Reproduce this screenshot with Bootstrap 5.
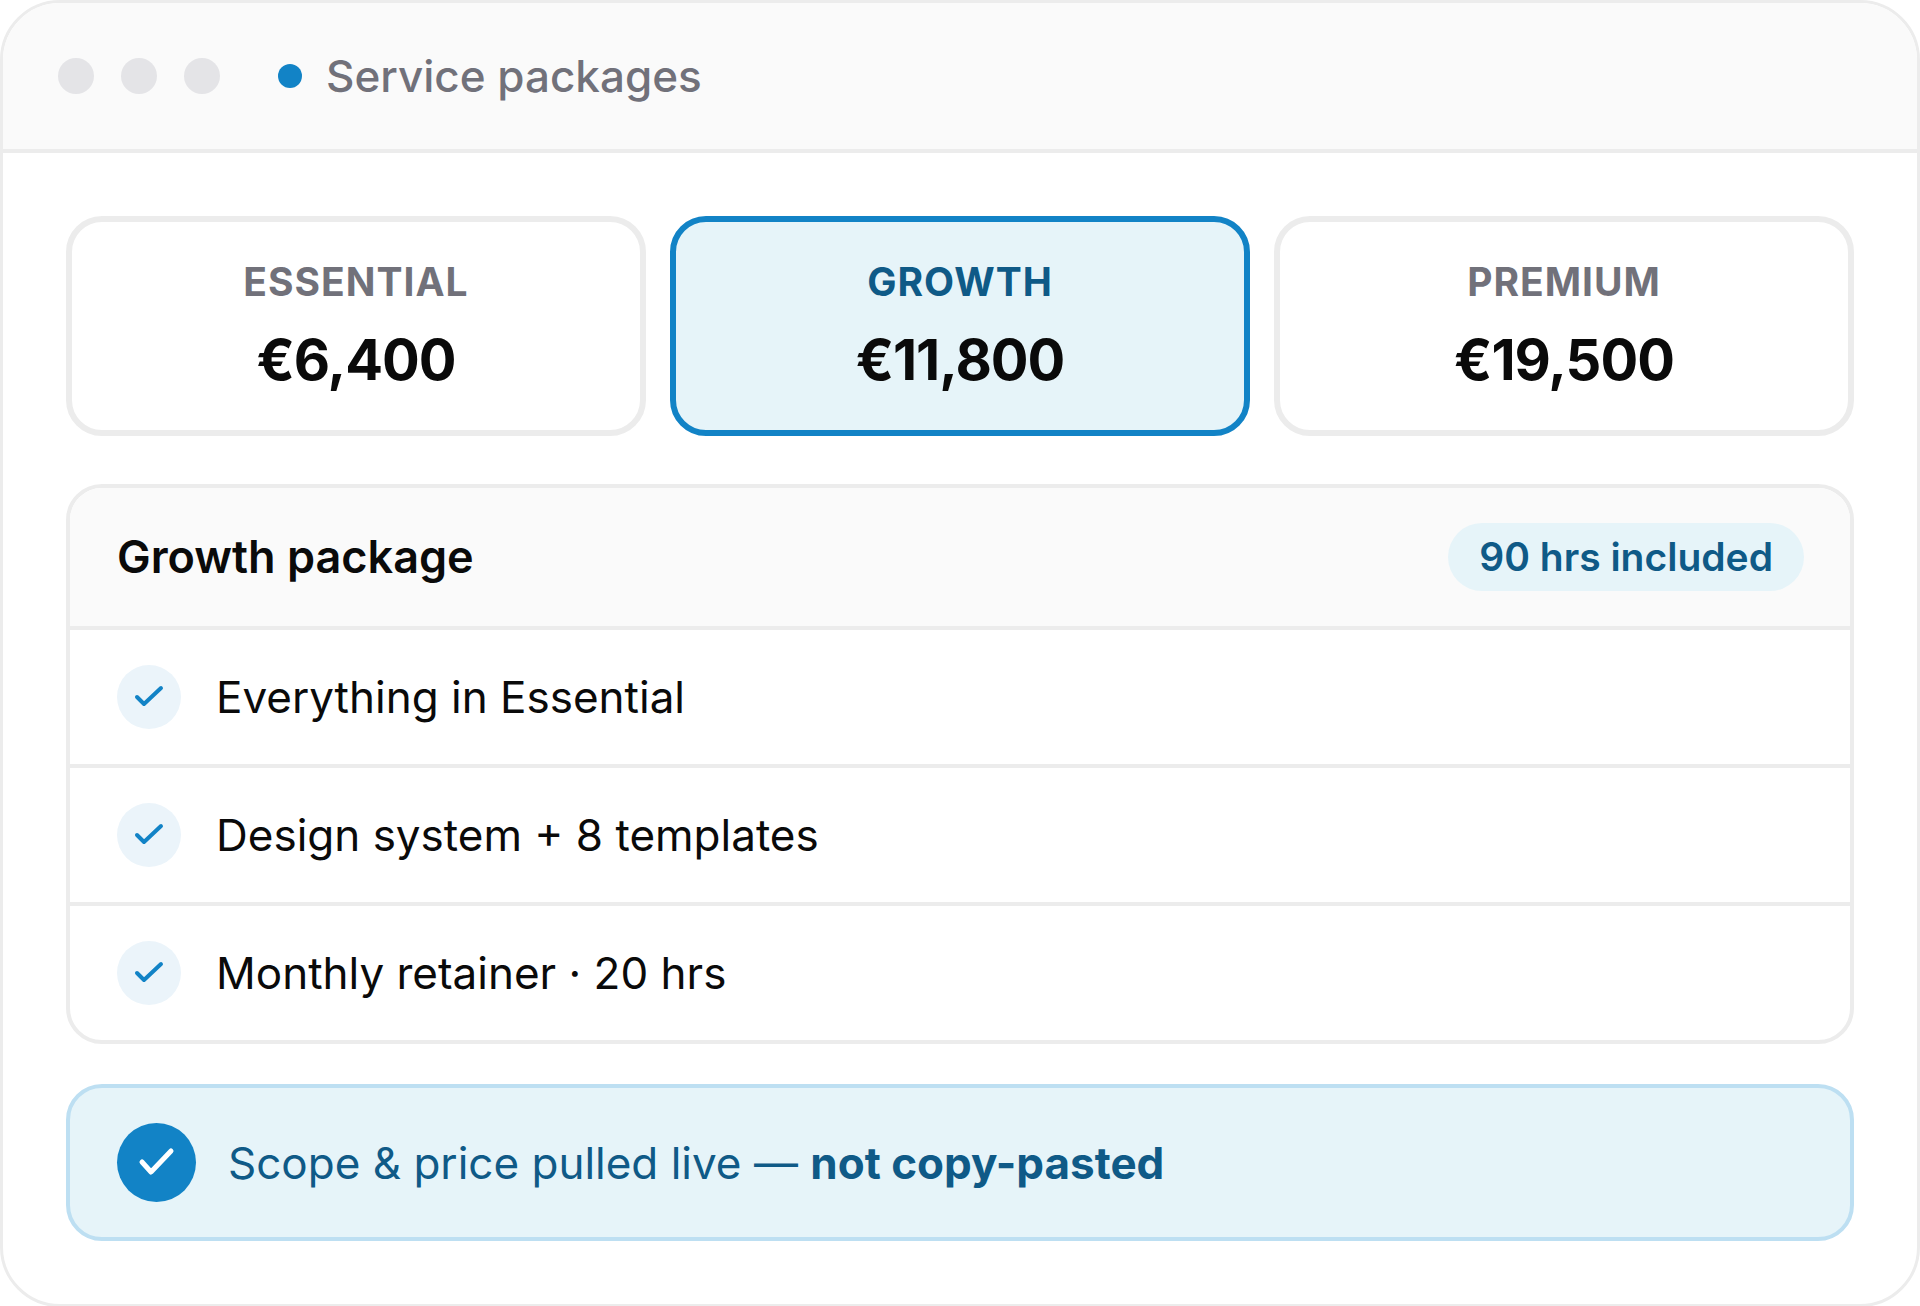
<!DOCTYPE html>
<html lang="en">
<head>
<meta charset="utf-8">
<meta name="viewport" content="width=device-width, initial-scale=1">
<title>Service packages</title>
<link href="https://cdn.jsdelivr.net/npm/bootstrap@5.3.0/dist/css/bootstrap.min.css" rel="stylesheet">
<style>
:root {
  --line: #ececec;
  --soft: #fafafa;
  --ink: #0a0a0a;
  --muted: #71717a;
  --brand: #1283c6;
  --brand-deep: #0f5a87;
  --brand-soft: #e6f4f9;
}
body { font-family: Inter, "Liberation Sans", sans-serif; color: var(--ink); font-size: 44px; line-height: 56px; background: #fff; }
.app-window { border: 3px solid var(--line); border-radius: 60px; overflow: hidden; }
.window-bar { background: var(--soft); border-bottom: 4px solid var(--line); padding: 45px 55px; color: var(--muted); font-weight: 500; }
.window-dots { gap: 27px; margin-right: 58px; }
.window-dots span { width: 36px; height: 36px; border-radius: 50%; background: #e4e4e7; }
.title-dot { width: 24px; height: 24px; border-radius: 50%; background: var(--brand); margin-right: 24px; }
.window-body { padding: 63px; }
.tiers { gap: 24px; margin-bottom: 48px; }
.tier { flex: 1 1 0; background: #fff; border: 6px solid var(--line); border-radius: 36px; padding: 34px 24px; color: var(--ink); text-align: center; }
.tier-name { display: block; font-size: 39px; line-height: 52px; font-weight: 700; letter-spacing: 1px; color: var(--muted); text-transform: uppercase; margin-bottom: 16px; }
.tier-price { display: block; font-size: 56px; line-height: 72px; font-weight: 700; letter-spacing: -1px; }
.tier.active { background: var(--brand-soft); border-color: var(--brand); }
.tier.active .tier-name { color: var(--brand-deep); }
.panel { border: 4px solid var(--line); border-radius: 36px; overflow: hidden; margin-bottom: 40px; }
.panel-top { background: var(--soft); padding: 35px 46px 35px 47px; }
.panel-top h2 { font-size: 45px; line-height: 56px; font-weight: 600; }
.hours { background: var(--brand-soft); color: var(--brand-deep); font-size: 39px; line-height: 68px; font-weight: 600; border-radius: 34px; padding: 0 31px; }
.feature { border-top: 4px solid var(--line); padding: 35px 47px; gap: 35px; }
.tick { width: 64px; height: 64px; border-radius: 50%; background: #ebf4fa; color: var(--brand); }
.notice { border: 4px solid #bddff2; background: var(--brand-soft); color: var(--brand-deep); border-radius: 36px; padding: 35px 47px; gap: 32px; }
.notice-tick { width: 79px; height: 79px; border-radius: 50%; background: var(--brand); color: #fff; }
</style>
</head>
<body>
<main class="app-window min-vh-100">
  <header class="window-bar d-flex align-items-center">
    <div class="window-dots d-flex" aria-hidden="true"><span></span><span></span><span></span></div>
    <span class="title-dot flex-shrink-0"></span>
    <span>Service packages</span>
  </header>
  <div class="window-body">
    <div class="tiers d-flex">
      <button type="button" class="tier" aria-pressed="false"><span class="tier-name">Essential</span><span class="tier-price">€6,400</span></button>
      <button type="button" class="tier active" aria-pressed="true"><span class="tier-name">Growth</span><span class="tier-price">€11,800</span></button>
      <button type="button" class="tier" aria-pressed="false"><span class="tier-name">Premium</span><span class="tier-price">€19,500</span></button>
    </div>
    <section class="panel">
      <div class="panel-top d-flex align-items-center justify-content-between">
        <h2 class="mb-0">Growth package</h2>
        <span class="hours">90 hrs included</span>
      </div>
      <ul class="list-unstyled mb-0">
        <li class="feature d-flex align-items-center">
          <svg class="tick flex-shrink-0" viewBox="0 0 64 64" fill="none" stroke="currentColor" stroke-width="4" stroke-linecap="round" stroke-linejoin="round" aria-hidden="true"><path d="M20 32L27 39L44 23"/></svg>
          <span>Everything in Essential</span>
        </li>
        <li class="feature d-flex align-items-center">
          <svg class="tick flex-shrink-0" viewBox="0 0 64 64" fill="none" stroke="currentColor" stroke-width="4" stroke-linecap="round" stroke-linejoin="round" aria-hidden="true"><path d="M20 32L27 39L44 23"/></svg>
          <span>Design system + 8 templates</span>
        </li>
        <li class="feature d-flex align-items-center">
          <svg class="tick flex-shrink-0" viewBox="0 0 64 64" fill="none" stroke="currentColor" stroke-width="4" stroke-linecap="round" stroke-linejoin="round" aria-hidden="true"><path d="M20 32L27 39L44 23"/></svg>
          <span>Monthly retainer · 20 hrs</span>
        </li>
      </ul>
    </section>
    <div class="notice d-flex align-items-center">
      <svg class="notice-tick flex-shrink-0" viewBox="0 0 79 79" fill="none" stroke="currentColor" stroke-width="5" stroke-linecap="round" stroke-linejoin="round" aria-hidden="true"><path d="M25 39L34 49L54 28"/></svg>
      <span>Scope &amp; price pulled live — <strong class="fw-bold">not copy-pasted</strong></span>
    </div>
  </div>
</main>
<script src="https://cdn.jsdelivr.net/npm/bootstrap@5.3.0/dist/js/bootstrap.bundle.min.js"></script>
</body>
</html>
